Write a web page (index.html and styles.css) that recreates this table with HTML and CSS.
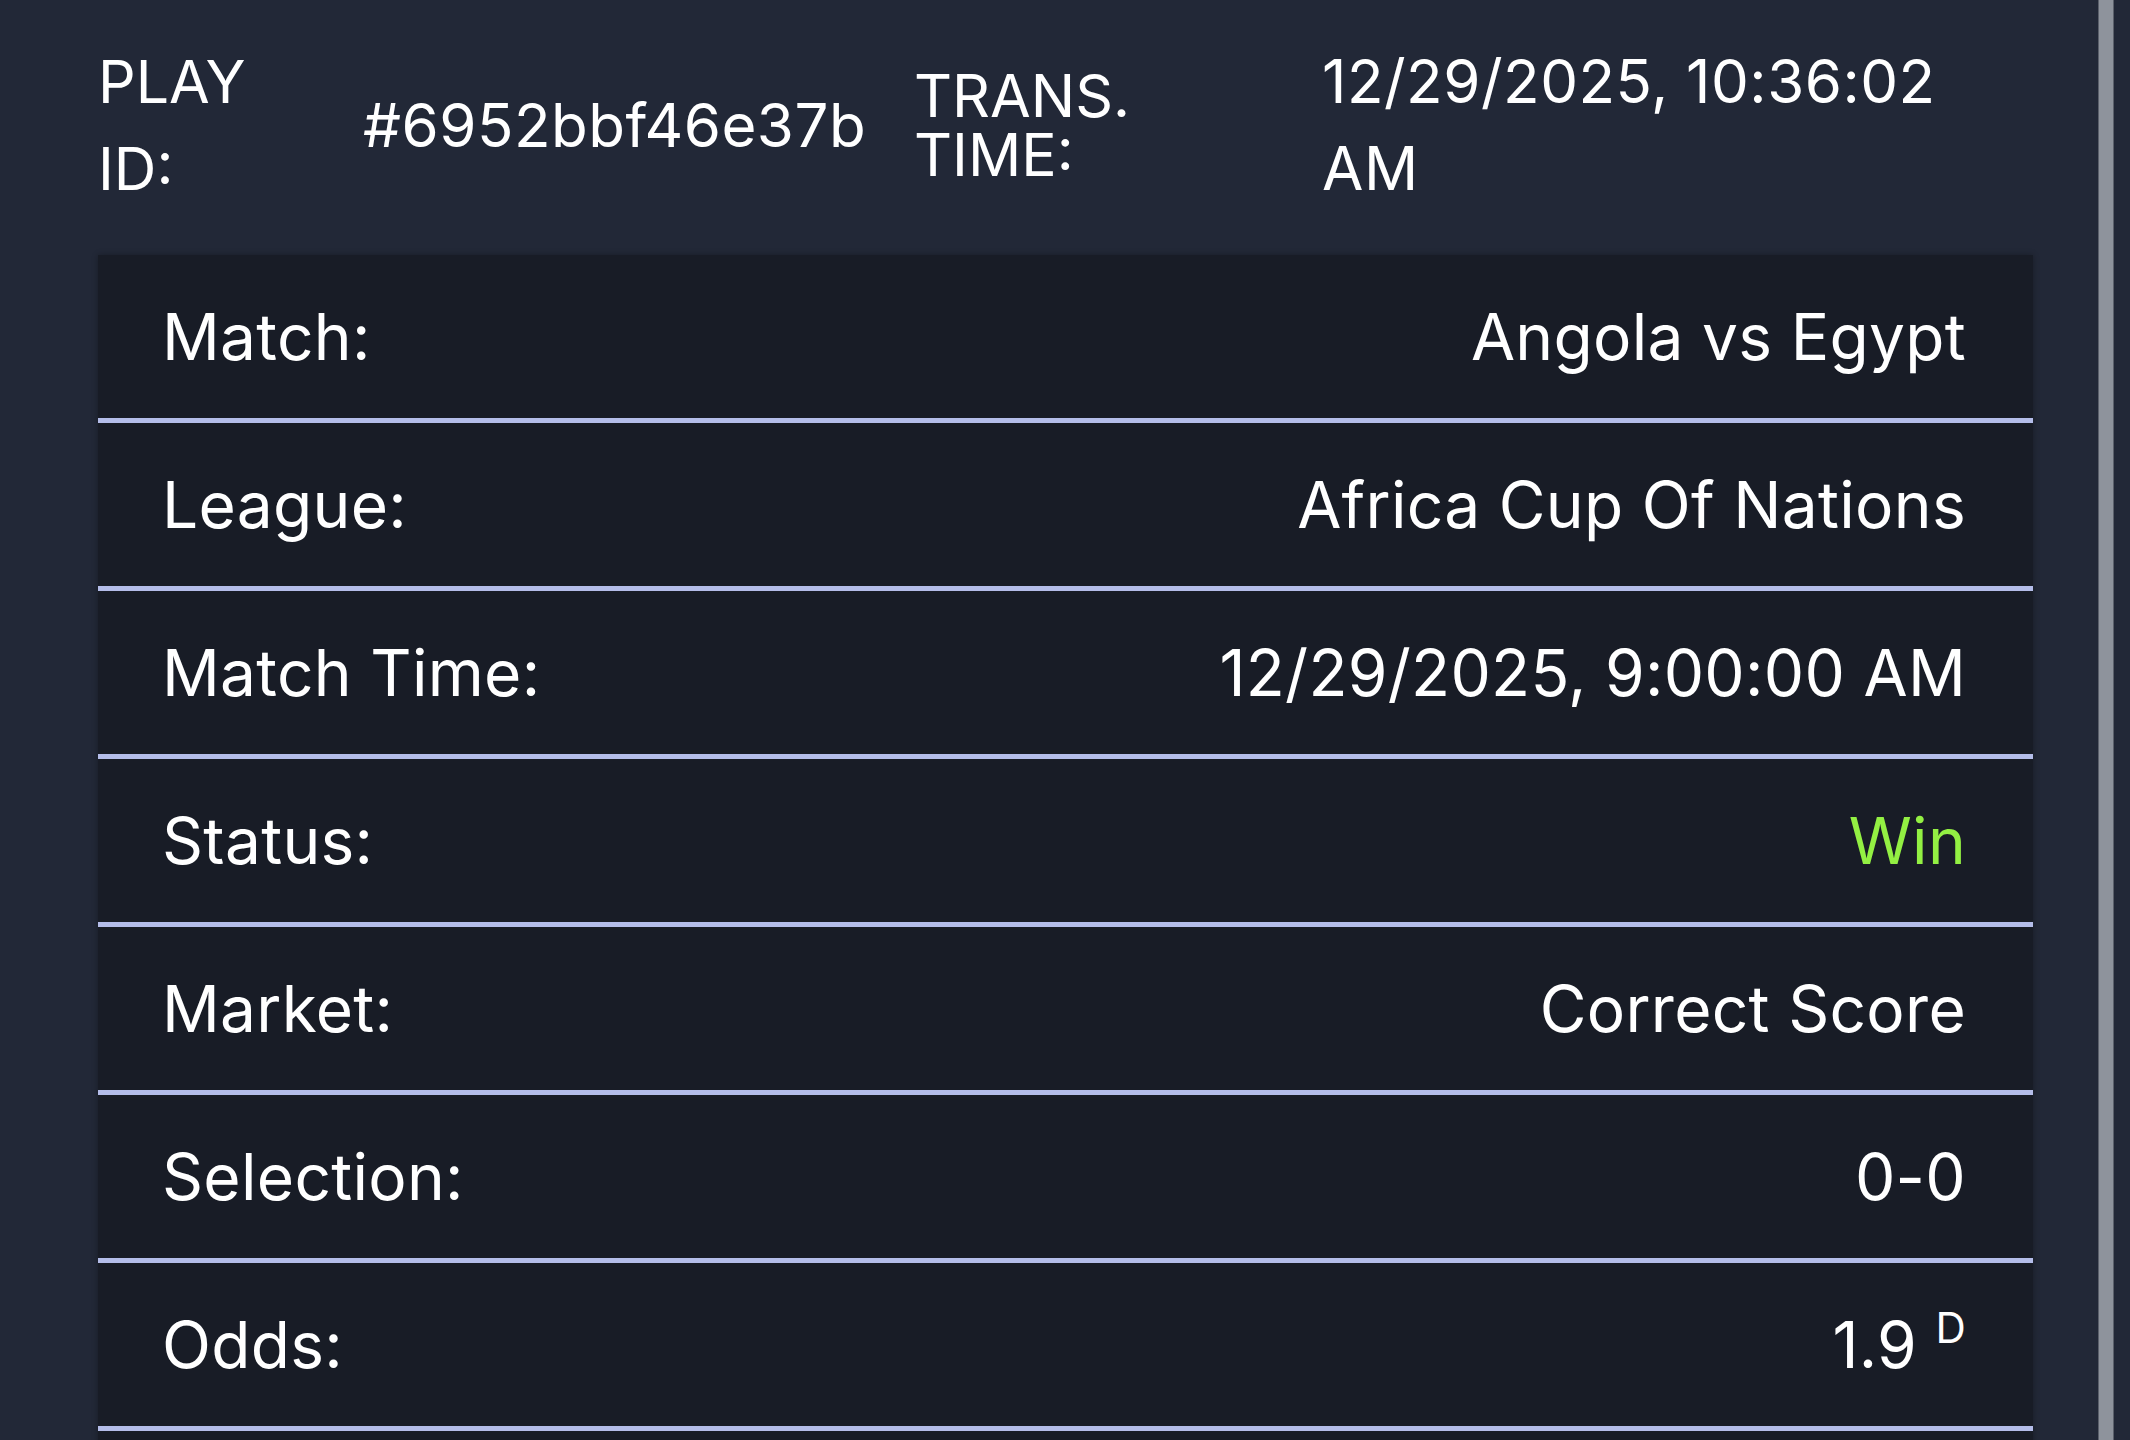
FILE: index.html
```html
<!DOCTYPE html>
<html lang="en">
<head>
    <meta charset="UTF-8">
    <meta name="viewport" content="width=device-width, initial-scale=1.0">
    <title>Play Details</title>
    <link rel="stylesheet" href="styles.css">
</head>
<body>
    <div class="screen">
      <main class="receipt">
        <header class="receipt-meta">
          <div class="meta-cell"><span class="meta-label">PLAY ID:</span></div>
          <div class="meta-cell"><span class="meta-value">#6952bbf46e37b</span></div>
          <div class="meta-cell"><span class="meta-label tight">TRANS. TIME:</span></div>
          <div class="meta-cell"><span class="meta-value wrap">12/29/2025, 10:36:02 AM</span></div>
        </header>

        <section class="details">
          <div class="detail-row">
            <span class="detail-label">Match:</span>
            <span class="detail-value">Angola vs Egypt</span>
          </div>
          <div class="detail-row">
            <span class="detail-label">League:</span>
            <span class="detail-value">Africa Cup Of Nations</span>
          </div>
          <div class="detail-row">
            <span class="detail-label">Match Time:</span>
            <span class="detail-value">12/29/2025, 9:00:00 AM</span>
          </div>
          <div class="detail-row">
            <span class="detail-label">Status:</span>
            <span class="detail-value win">Win</span>
          </div>
          <div class="detail-row">
            <span class="detail-label">Market:</span>
            <span class="detail-value">Correct Score</span>
          </div>
          <div class="detail-row">
            <span class="detail-label">Selection:</span>
            <span class="detail-value">0-0</span>
          </div>
          <div class="detail-row">
            <span class="detail-label">Odds:</span>
            <span class="detail-value">1.9 <sup class="odds-type">D</sup></span>
          </div>
          <div class="detail-row"></div>
        </section>
      </main>
      <div class="scroll-rail"></div>
    </div>
</body>
</html>
```

FILE: styles.css
```css
html, body {
    margin: 0;
    padding: 0;
    width: 100vw;
    height: 100vh;
    overflow: hidden;
}
body {
    background: #222837;
    color: #fff;
    font-family: Inter, "Noto Sans", sans-serif;
}
.screen {
    display: flex;
    height: 100vh;
    padding-right: 16px;
}
.receipt {
    flex: 1;
    padding: 0 65px 0 98px;
}
.scroll-rail {
    width: 16px;
    background: #8e939c;
    box-shadow: inset 1px 0 0 #5b606b, inset -1px 0 0 #5b606b;
}

/* top summary: id + transaction time */
.receipt-meta {
    display: grid;
    grid-template-columns: 265px 551px 408px 1fr;
    align-items: center;
    padding: 38px 0 43px 0;
    font-size: 59px;
    line-height: 87px;
}
.meta-cell {
    display: flex;
    align-items: center;
}
.meta-label {
    max-width: 220px;
}
.meta-label.tight {
    line-height: 59px;
}
.meta-value {
    font-size: 60px;
    letter-spacing: 0.5px;
}
.meta-value.wrap {
    max-width: 660px;
}

/* detail table */
.details {
    background: #181c26;
    box-shadow: 0 0 6px rgba(0, 0, 0, 0.3);
}
.detail-row {
    display: flex;
    align-items: center;
    justify-content: space-between;
    height: 163px;
    padding: 0 67px 0 64px;
    border-bottom: 5px solid #b4bde9;
    font-size: 64px;
    letter-spacing: 0.3px;
}
.detail-value.win {
    color: #93f043;
}
.odds-type {
    font-size: 42px;
    line-height: 0;
    vertical-align: 25px;
}
```
